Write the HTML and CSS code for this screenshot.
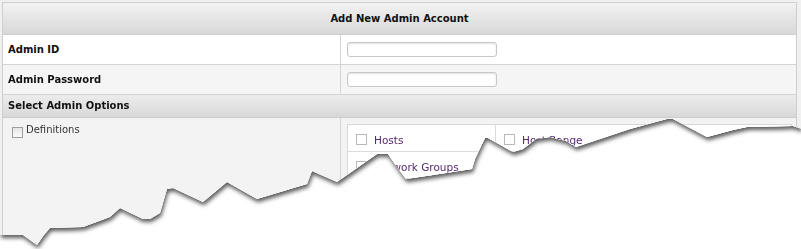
FILE: index.html
```html
<!DOCTYPE html>
<html lang="en">
<head>
    <meta charset="UTF-8">
    <title>Add New Admin Account</title>
    <link rel="stylesheet" href="styles.css">
</head>
<body>

    <div class="tear-shadow">
        <div class="sheet">
            <div class="panel">
                <div class="panel-head">Add New Admin Account</div>

                <div class="row">
                    <div class="label-cell">Admin ID</div>
                    <div class="value-cell"><input type="text" class="input-field"></div>
                </div>

                <div class="row row-alt">
                    <div class="label-cell">Admin Password</div>
                    <div class="value-cell"><input type="password" class="input-field"></div>
                </div>

                <div class="section-head">Select Admin Options</div>

                <div class="row row-options">
                    <div class="label-cell option-main">
                        <span class="check check-native"></span>
                        <span class="option-text">Definitions</span>
                    </div>
                    <div class="value-cell option-list">
                        <div class="sub-grid">
                            <div class="sub-item"><span class="check"></span><span class="sub-text">Hosts</span></div>
                            <div class="sub-item"><span class="check"></span><span class="sub-text">Host Range</span></div>
                            <div class="sub-item"><span class="check"></span><span class="sub-text">Services</span></div>
                            <div class="sub-item"><span class="check"></span><span class="sub-text">Network Groups</span></div>
                            <div class="sub-item"><span class="check"></span><span class="sub-text">Service Groups</span></div>
                            <div class="sub-item"><span class="check"></span><span class="sub-text">Schedules</span></div>
                        </div>
                    </div>
                </div>
            </div>
        </div>
    </div>

</body>
</html>
```

FILE: styles.css
```css
body {
    margin: 0;
    background-color: #fff;
    font-family: "DejaVu Sans", Verdana, sans-serif;
    font-size: 10px;
    color: #222;
}
.tear-shadow {
    filter: drop-shadow(1px 3px 2px rgba(0, 0, 0, 0.65));
}
.sheet {
    height: 249px;
    overflow: hidden;
    background-color: #f0f0f0;
    padding: 2px 4px 0 2px;
    box-sizing: border-box;
    clip-path: polygon(0 0, 801px 0, 801px 129px, 793px 126px, 747px 127px, 733px 130px, 707px 137px, 673px 119px, 667px 119px, 630px 129px, 576px 147px, 566px 141px, 550px 137px, 536px 139px, 523px 149px, 513px 152px, 488px 138px, 485px 138px, 475px 159px, 472px 169px, 433px 175px, 406px 179px, 397px 167px, 388px 154px, 377px 154px, 337px 182px, 312px 171px, 307px 184px, 257px 199px, 227px 182px, 203px 202px, 173px 188px, 167px 189px, 160px 213px, 150px 219px, 143px 219px, 120px 208px, 110px 217px, 83px 227px, 50px 228px, 44px 235px, 37px 245px, 23px 235px, 0 235px);
}
.panel {
    border: 1px solid #cfcfcf;
    border-bottom: none;
    background-color: #fff;
}
.panel-head {
    height: 31px;
    line-height: 31px;
    text-align: center;
    font-weight: bold;
    color: #111;
    background: linear-gradient(#f2f2f2, #d8d8d8);
    border-bottom: 1px solid #cdcdcd;
}
.row {
    display: flex;
    height: 29px;
    border-bottom: 1px solid #d4d4d4;
    background-color: #fff;
}
.row-alt {
    background-color: #f5f5f5;
}
.label-cell {
    width: 338px;
    border-right: 1px solid #d4d4d4;
    padding-left: 5px;
    box-sizing: border-box;
    display: flex;
    align-items: center;
    font-weight: bold;
    color: #111;
}
.value-cell {
    flex: 1;
    display: flex;
    align-items: center;
    padding-left: 6px;
}
.input-field {
    width: 150px;
    height: 15px;
    box-sizing: border-box;
    margin: 0;
    padding: 0 3px;
    border: 1px solid #c8c8c8;
    border-radius: 3px;
    box-shadow: inset 0 1px 2px rgba(0, 0, 0, 0.12);
    background-color: #fff;
}
.section-head {
    height: 22px;
    line-height: 22px;
    padding-left: 5px;
    font-weight: bold;
    color: #111;
    background: linear-gradient(#ececec, #d8d8d8);
    border-bottom: 1px solid #cdcdcd;
}
.row-options {
    height: 140px;
    border-bottom: none;
    background-color: #f4f3f4;
}
.option-main {
    align-items: flex-start;
    padding: 6px 0 0 9px;
    font-weight: normal;
}
.option-text {
    color: #333;
    margin-left: 3px;
}
.check {
    display: inline-block;
    width: 11px;
    height: 11px;
    box-sizing: border-box;
    border: 1px solid #b9b9b9;
    background-color: #fff;
    flex-shrink: 0;
}
.check-native {
    margin-top: 3px;
    border-color: #9d9d9d;
    background: linear-gradient(#e6e6e6, #fafafa);
}
.option-list {
    align-items: flex-start;
    padding: 6px 0 0 6px;
}
.sub-grid {
    display: grid;
    grid-template-columns: 148px 148px 147px;
    border: 1px solid #d8d8d8;
    background-color: #fff;
}
.sub-item {
    height: 27px;
    box-sizing: border-box;
    display: flex;
    align-items: center;
    padding: 3px 0 0 8px;
    border-right: 1px solid #dcdcdc;
    border-bottom: 1px solid #dcdcdc;
}
.sub-item:nth-child(3n) {
    border-right: none;
}
.sub-text {
    margin-left: 7px;
    font-size: 10.5px;
    color: #55286f;
}
```
